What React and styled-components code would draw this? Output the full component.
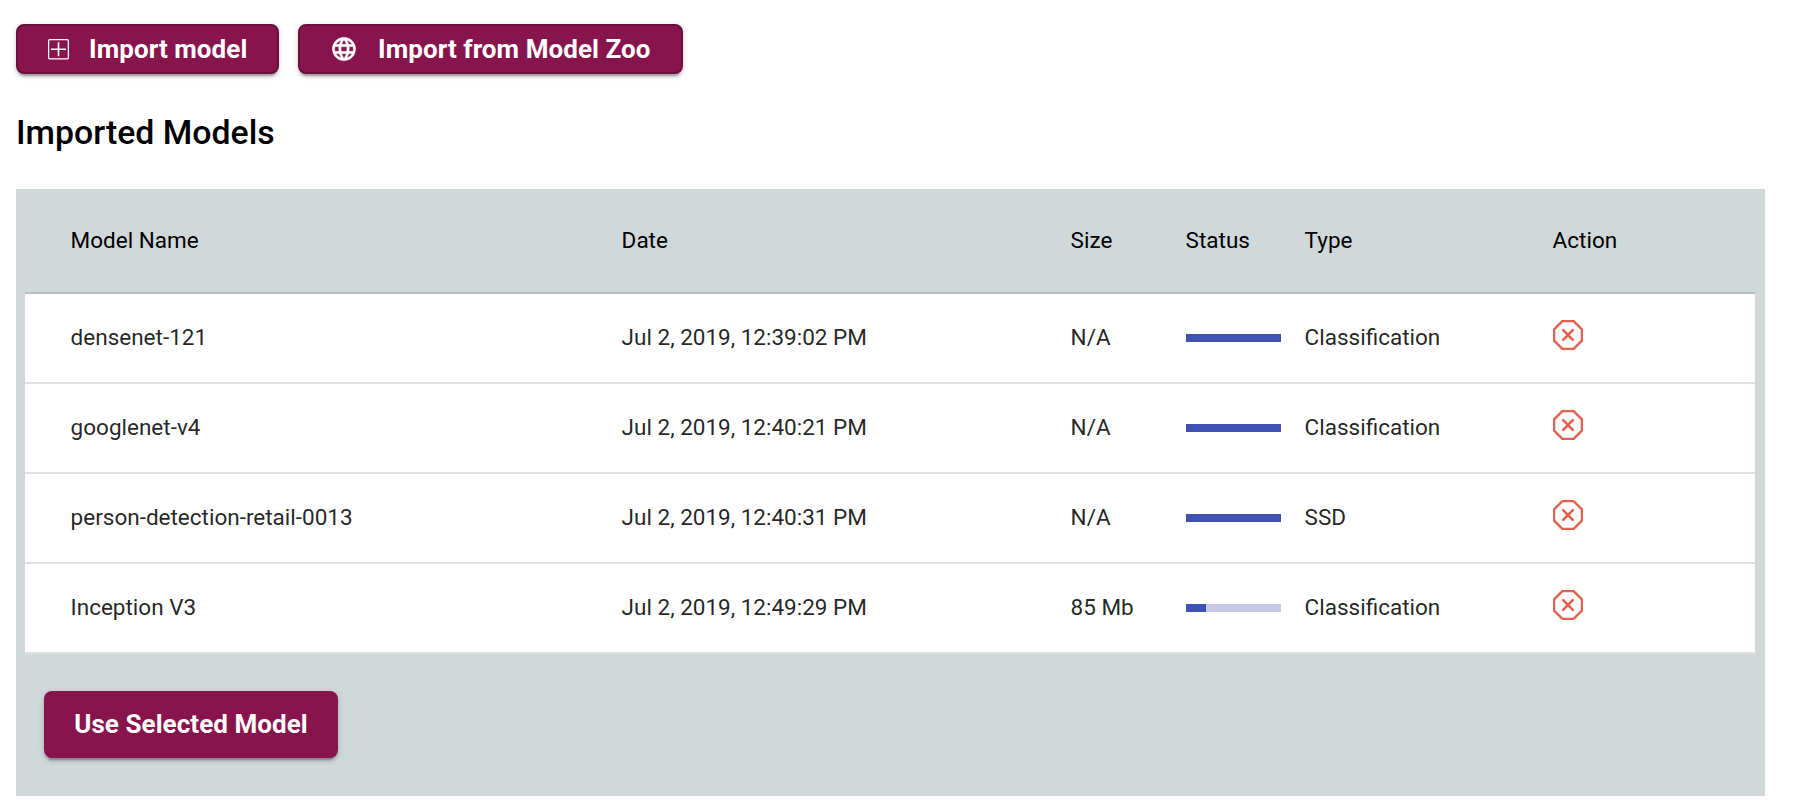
import React from 'react';
import styled, { createGlobalStyle } from 'styled-components';

const GlobalStyle = createGlobalStyle`
  * { box-sizing: border-box; }
  body {
    margin: 0;
    background: #fff;
    font-family: Roboto, "Liberation Sans", sans-serif;
    color: #000;
  }
`;

const Page = styled.main`
  width: 1765px;
  padding: 24px 0 14px 16px;
`;

const Toolbar = styled.div`
  display: flex;
  gap: 19px;
`;

const Button = styled.button`
  display: flex;
  align-items: center;
  width: ${(p) => p.$width}px;
  height: 50px;
  padding: 0 0 0 30px;
  border: 2px solid #6b0f3c;
  border-radius: 8px;
  background: #88144d;
  color: #fff;
  font: 700 26px/48px Roboto, "Liberation Sans", sans-serif;
  letter-spacing: 0.06px;
  white-space: nowrap;
  box-shadow:
    0 4.5px 1.5px -3px rgba(0, 0, 0, 0.2),
    0 3px 3px 0 rgba(0, 0, 0, 0.14),
    0 1.5px 7.5px 0 rgba(0, 0, 0, 0.12);
`;

const SubmitButton = styled(Button)`
  height: 67px;
  padding: 0 0 2px;
  justify-content: center;
  border: 0;
`;

const ButtonIcon = styled.svg`
  flex: none;
  width: ${(p) => p.$size}px;
  height: ${(p) => p.$size}px;
  margin-right: ${(p) => p.$gap}px;
`;

const Title = styled.h2`
  margin: 37px 0 34px;
  font-size: 33.8px;
  font-weight: 500;
  line-height: 44px;
`;

const Panel = styled.section`
  height: 607px;
  padding: 0 10px 0 9px;
  background: #d0d8da;
`;

const Row = styled.div`
  display: grid;
  grid-template-columns: 551px 449px 115px 119px 248px 1fr;
  align-items: center;
  height: 90px;
  padding-left: 46px;
  border-bottom: 2px solid #e0e0e0;
  background: #fff;
  color: rgba(0, 0, 0, 0.87);
  font-size: 22.5px;
  font-weight: 400;
  line-height: 30px;
  white-space: nowrap;
`;

const HeaderRow = styled(Row)`
  height: 105px;
  border-bottom-color: #b7bebf;
  background: transparent;
  color: #000;
`;

const Cell = styled.span`
  padding-bottom: 2px;
  margin-left: -0.4px;
`;

const Track = styled.div`
  width: 95px;
  height: 8px;
  background: #c5cae9;
`;

const Fill = styled.div`
  height: 100%;
  background: #3f51b5;
`;

const RemoveIcon = styled.svg`
  display: block;
  width: 30px;
  height: 30px;
  margin-top: -6px;
`;

const Footer = styled.div`
  padding: 37px 0 0 19px;
`;

const models = [
  { name: 'densenet-121', date: 'Jul 2, 2019, 12:39:02 PM', size: 'N/A', progress: 100, type: 'Classification' },
  { name: 'googlenet-v4', date: 'Jul 2, 2019, 12:40:21 PM', size: 'N/A', progress: 100, type: 'Classification' },
  { name: 'person-detection-retail-0013', date: 'Jul 2, 2019, 12:40:31 PM', size: 'N/A', progress: 100, type: 'SSD' },
  { name: 'Inception V3', date: 'Jul 2, 2019, 12:49:29 PM', size: '85 Mb', progress: 21, type: 'Classification' },
];

export default function App() {
  return (
    <Page>
      <GlobalStyle />
      <Toolbar>
        <Button $width={263}>
          <ButtonIcon $size={21} $gap={20} viewBox="0 0 21 21" fill="none" stroke="#fff">
            <rect x="0.6" y="0.6" width="19.8" height="19.3" rx="1.5" strokeWidth="1.3" />
            <path d="M10.5 3.2v14M3 10.2h15" strokeWidth="1.6" />
          </ButtonIcon>
          Import model
        </Button>
        <Button $width={385}>
          <ButtonIcon $size={28} $gap={20} viewBox="0 0 24 24" fill="#fff" stroke="#fff" strokeWidth="0.3">
            <path d="M11.99 2C6.47 2 2 6.48 2 12s4.47 10 9.99 10C17.52 22 22 17.52 22 12S17.52 2 11.99 2zm6.93 6h-2.95c-.32-1.25-.78-2.45-1.38-3.56 1.84.63 3.37 1.91 4.33 3.56zM12 4.04c.83 1.2 1.48 2.53 1.91 3.96h-3.82c.43-1.43 1.08-2.76 1.91-3.96zM4.26 14C4.1 13.36 4 12.69 4 12s.1-1.36.26-2h3.38c-.08.66-.14 1.32-.14 2s.06 1.34.14 2H4.26zm.82 2h2.95c.32 1.25.78 2.45 1.38 3.56-1.84-.63-3.37-1.9-4.33-3.56zm2.95-8H5.08c.96-1.66 2.49-2.93 4.33-3.56C8.81 5.55 8.35 6.75 8.03 8zM12 19.96c-.83-1.2-1.48-2.53-1.91-3.96h3.82c-.43 1.43-1.08 2.76-1.91 3.96zM14.34 14H9.66c-.09-.66-.16-1.32-.16-2s.07-1.35.16-2h4.68c.09.65.16 1.32.16 2s-.07 1.34-.16 2zm.25 5.56c.6-1.11 1.06-2.31 1.38-3.56h2.95c-.96 1.65-2.49 2.93-4.33 3.56zM16.36 14c.08-.66.14-1.32.14-2s-.06-1.34-.14-2h3.38c.16.64.26 1.31.26 2s-.1 1.36-.26 2h-3.38z" />
          </ButtonIcon>
          Import from Model Zoo
        </Button>
      </Toolbar>
      <Title>Imported Models</Title>
      <Panel>
        <HeaderRow>
          <Cell>Model Name</Cell>
          <Cell>Date</Cell>
          <Cell>Size</Cell>
          <Cell>Status</Cell>
          <Cell>Type</Cell>
          <Cell>Action</Cell>
        </HeaderRow>
        {models.map((m) => (
          <Row key={m.name}>
            <Cell>{m.name}</Cell>
            <Cell>{m.date}</Cell>
            <Cell>{m.size}</Cell>
            <Track>
              <Fill style={{ width: `${m.progress}%` }} />
            </Track>
            <Cell>{m.type}</Cell>
            <RemoveIcon viewBox="0 0 30 30" fill="none" stroke="#e65f4c" strokeWidth="2.3">
              <path d="M9.4 1.1h11.2L28.9 9.4v11.2L20.6 28.9H9.4L1.1 20.6V9.4z" />
              <path d="M10.2 10.2l9.6 9.6M19.8 10.2l-9.6 9.6" strokeWidth="2.6" strokeLinecap="round" />
            </RemoveIcon>
          </Row>
        ))}
        <Footer>
          <SubmitButton $width={294}>Use Selected Model</SubmitButton>
        </Footer>
      </Panel>
    </Page>
  );
}
